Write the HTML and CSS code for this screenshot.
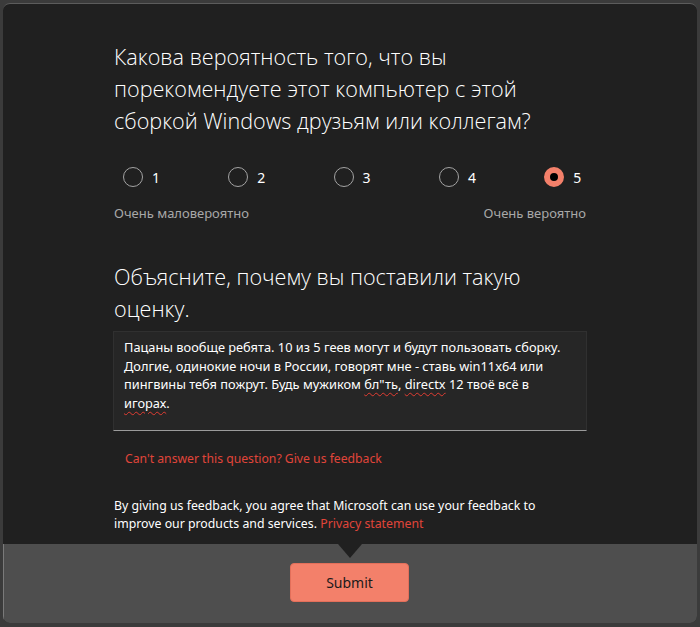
FILE: index.html
```html
<!DOCTYPE html>
<html lang="ru">
<head>
<meta charset="utf-8">
<link rel="stylesheet" href="styles.css">
</head>
<body>
<div class="window">
  <div class="main">
    <h1 class="question">Какова вероятность того, что вы порекомендуете этот компьютер с этой сборкой Windows друзьям или коллегам?</h1>
    <div class="scale">
      <label class="opt"><span class="radio"></span><span class="num">1</span></label>
      <label class="opt"><span class="radio"></span><span class="num">2</span></label>
      <label class="opt"><span class="radio"></span><span class="num">3</span></label>
      <label class="opt"><span class="radio"></span><span class="num">4</span></label>
      <label class="opt"><span class="radio checked"></span><span class="num">5</span></label>
    </div>
    <div class="scale-labels">
      <span>Очень маловероятно</span>
      <span>Очень вероятно</span>
    </div>
    <h2 class="question q2">Объясните, почему вы поставили такую оценку.</h2>
    <div class="answer">Пацаны вообще ребята. 10 из 5 геев могут и будут пользовать сборку. Долгие, одинокие ночи в России, говорят мне - ставь win11x64 или пингвины тебя пожрут. Будь мужиком <span class="spell">бл"ть</span>, <span class="spell">directx</span> 12 твоё всё в <span class="spell">игорах</span>.</div>
    <a class="cant" href="#">Can't answer this question? Give us feedback</a>
    <p class="legal">By giving us feedback, you agree that Microsoft can use your feedback to improve our products and services. <a href="#">Privacy statement</a></p>
  </div>
  <div class="footer">
    <span class="notch"></span>
    <button class="submit">Submit</button>
  </div>
</div>
</body>
</html>
```
FILE: styles.css
```css
* { box-sizing: border-box; }
html, body { margin: 0; padding: 0; }
body {
  background: #3b3b3b;
  width: 700px;
  height: 627px;
  padding: 3px 3px 4px 3px;
  font-family: "Noto Sans", "Open Sans", sans-serif;
}
.window {
  height: 620px;
  display: flex;
  flex-direction: column;
  background: #202020;
  border-radius: 7px;
  border-top: 1px solid #5c5c5c;
  overflow: hidden;
}
.main {
  flex: 1;
  padding: 37px 111px 0 111px;
  color: #fff;
}
.question {
  margin: 0;
  font-family: "Open Sans", "Noto Sans", sans-serif;
  font-weight: 300;
  font-size: 21.6px;
  line-height: 32px;
  color: #fff;
}
.scale {
  display: grid;
  grid-template-columns: repeat(5, 105.3px);
  padding-left: 9px;
  margin-top: 26px;
  height: 28px;
  align-items: center;
}
.opt {
  display: flex;
  align-items: center;
  gap: 9px;
}
.radio {
  width: 20px;
  height: 20px;
  border-radius: 50%;
  border: 1px solid #a3a3a3;
}
.radio.checked {
  border: 6px solid #f3806a;
  background: #000;
}
.num {
  font-size: 14px;
  color: #fff;
}
.scale-labels {
  display: flex;
  justify-content: space-between;
  font-size: 13px;
  color: #a8a8a8;
  margin-top: 13px;
  line-height: 18px;
}
.q2 {
  margin-top: 39px;
}
.answer {
  margin-top: 6px;
  width: 474px;
  height: 100px;
  margin-left: -1px;
  background: #262626;
  border: 1px solid #303030;
  border-bottom: 1px solid #9b9b9b;
  padding: 6px 10px 0 10px;
  font-size: 12.8px;
  line-height: 18.5px;
  color: #fff;
}
.spell {
  text-decoration: underline wavy #e03c32;
  text-decoration-thickness: 1px;
  text-underline-offset: 3px;
}
.cant {
  display: block;
  margin: 19px 0 0 11px;
  font-size: 12.2px;
  line-height: 18px;
  color: #e0453a;
  text-decoration: none;
}
.legal {
  margin: 29px 0 0 0;
  max-width: 440px;
  font-size: 12.3px;
  line-height: 18px;
  color: #fff;
}
.legal a {
  color: #e0453a;
  text-decoration: none;
}
.footer {
  position: relative;
  height: 79px;
  background: #4e4e4e;
  border-left: 1px solid #7a7a7a;
  display: flex;
  justify-content: center;
  align-items: flex-start;
  padding-top: 19px;
}
.notch {
  position: absolute;
  top: 0;
  left: 334px;
  width: 0;
  height: 0;
  border-left: 12px solid transparent;
  border-right: 12px solid transparent;
  border-top: 14px solid #202020;
}
.submit {
  width: 119px;
  height: 39px;
  background: #f3806a;
  border: 1px solid #e36f5a;
  border-radius: 4px;
  font-family: "Noto Sans", sans-serif;
  font-size: 14px;
  color: #1a1a1a;
  margin-left: -2px;
}
```
